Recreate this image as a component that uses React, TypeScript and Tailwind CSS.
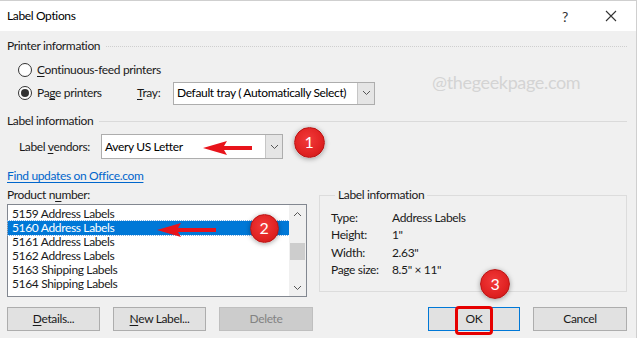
import type { ReactNode } from 'react'

const FONT = { fontFamily: '"Segoe UI", Lato, "Liberation Sans", sans-serif', letterSpacing: '-0.35px' }

function Radio({ checked }: { checked?: boolean }) {
  return (
    <span className="flex h-[14px] w-[14px] items-center justify-center rounded-full border border-[#333] bg-white">
      {checked && <span className="h-[8px] w-[8px] rounded-full bg-[#333]" />}
    </span>
  )
}

function Chevron() {
  return (
    <svg width="9" height="6" viewBox="0 0 9 6">
      <path d="M1 1 L4.5 4.5 L8 1" fill="none" stroke="#555" strokeWidth="1" />
    </svg>
  )
}

function Select({ value, className }: { value: string; className: string }) {
  return (
    <div className={`flex border border-[#adadad] bg-white ${className}`}>
      <div className="flex flex-1 items-center overflow-hidden whitespace-nowrap pl-[3px] text-[12px] text-black">
        {value}
      </div>
      <div className="flex w-[17px] items-center justify-center border-l border-[#c6c6c6] bg-[#e5e5e5]">
        <Chevron />
      </div>
    </div>
  )
}

function Button({ children, className = '' }: { children: ReactNode; className?: string }) {
  return (
    <div className={`flex h-[24px] items-center justify-center border text-[12px] ${className}`}>
      {children}
    </div>
  )
}

function Badge({ n, x, y, d }: { n: number; x: number; y: number; d: number }) {
  return (
    <div
      className="absolute flex items-center justify-center rounded-full border border-[#b81414] bg-[radial-gradient(circle_at_45%_40%,#f23a3a_0%,#e02222_60%,#c41616_100%)] text-[16px] text-white shadow-[0_1px_5px_rgba(0,0,0,0.35)]"
      style={{ left: x - d / 2, top: y - d / 2, width: d, height: d }}
    >
      {n}
    </div>
  )
}

// left-pointing red arrow, tip at x1
function Arrow({ x1, x2, y }: { x1: number; x2: number; y: number }) {
  const w = x2 - x1
  return (
    <svg className="absolute" style={{ left: x1, top: y - 8 }} width={w} height={16} viewBox={`0 0 ${w} 16`}>
      <path d={`M0 8 L24 1 L21 6 L${w} 6 L${w} 10 L21 10 L24 15 Z`} fill="#e8141b" />
    </svg>
  )
}

const items = [
  '5159 Address Labels',
  '5160 Address Labels',
  '5161 Address Labels',
  '5162 Address Labels',
  '5163 Shipping Labels',
  '5164 Shipping Labels',
]

const info = [
  ['Type:', 'Address Labels'],
  ['Height:', '1"'],
  ['Width:', '2.63"'],
  ['Page size:', '8.5" × 11"'],
]

export default function App() {
  return (
    <div
      className="relative h-[338px] w-[637px] overflow-hidden border-r border-t border-[#cfcfcf] bg-[#f0f0f0] text-[12px] text-[#1a1a1a]"
      style={FONT}
    >
      {/* Title bar */}
      <div className="flex h-[30px] items-center bg-white pl-[7px] pr-[19px]">
        <span className="flex-1 text-[12px] text-black">Label Options</span>
        <span className="mr-[37px] text-[14px] text-[#333]">?</span>
        <svg width="12" height="12" viewBox="0 0 12 12">
          <path d="M1 1 L11 11 M11 1 L1 11" stroke="#333" strokeWidth="1.1" />
        </svg>
      </div>

      <div className="flex flex-col pl-[7px] pr-[9px]">
        {/* Printer information */}
        <div className="mt-[7px] flex h-[16px] items-center">
          <span>Printer information</span>
          <div className="ml-[6px] flex-1 border-t border-dotted border-[#cfcfcf]" />
        </div>
        <div className="mt-[8px] flex h-[16px] items-center gap-[5px] pl-[11px]">
          <Radio />
          <span>
            <u className="underline-offset-2">C</u>ontinuous-feed printers
          </span>
        </div>
        <div className="mt-[3px] flex h-[24px] items-center">
          <div className="flex w-[130px] items-center gap-[5px] pl-[11px]">
            <Radio checked />
            <span>
              Pa<u className="underline-offset-2">g</u>e printers
            </span>
          </div>
          <span className="w-[36px]">
            <u className="underline-offset-2">T</u>ray:
          </span>
          <Select value="Default tray ( Automatically Select)" className="h-[23px] w-[202px]" />
        </div>

        {/* Label information */}
        <div className="mt-[8px] flex h-[16px] items-center">
          <span>Label information</span>
          <div className="ml-[6px] flex-1 border-t border-[#dadada]" />
        </div>
        <div className="mt-[5px] flex h-[25px] items-center pl-[12px]">
          <span className="w-[82px]">
            Label <u className="underline-offset-2">v</u>endors:
          </span>
          <Select value="Avery US Letter" className="h-[25px] w-[182px]" />
        </div>
        <div className="mt-[9px] flex h-[16px] items-center">
          <span className="text-[#0066cc] underline underline-offset-2">Find updates on Office.com</span>
        </div>

        {/* Product list + details */}
        <div className="mt-[3px] flex">
          <div className="flex w-[300px] flex-col">
            <div className="flex h-[16px] items-center">
              Product n<u className="underline-offset-2">u</u>mber:
            </div>
            <div className="mt-[1px] flex h-[93px] border border-[#828790] bg-white">
              <div className="flex flex-1 flex-col pt-[2px]">
                {items.map((t, i) => (
                  <div
                    key={t}
                    className={`flex h-[14px] items-center pl-[4px] ${
                      i === 1 ? 'bg-[#0078d7] text-white outline-1 outline-dotted outline-[#7fb2e5]' : ''
                    }`}
                  >
                    {t}
                  </div>
                ))}
              </div>
              <div className="flex w-[17px] flex-col items-center bg-[#f0f0f0]">
                <div className="flex h-[17px] items-center justify-center">
                  <svg width="9" height="6" viewBox="0 0 9 6">
                    <path d="M1 5 L4.5 1.5 L8 5" fill="none" stroke="#555" strokeWidth="1" />
                  </svg>
                </div>
                <div className="mt-[21px] h-[17px] w-[15px] bg-[#cdcdcd]" />
                <div className="flex-1" />
                <div className="flex h-[17px] items-center justify-center">
                  <Chevron />
                </div>
              </div>
            </div>
          </div>

          <fieldset className="ml-[12px] h-[105px] flex-1 border border-[#dcdcdc] pl-[11px]">
            <legend className="ml-[4px] px-[3px] leading-[16px]">Label information</legend>
            <div className="mt-[6px] flex flex-col">
              {info.map(([k, v]) => (
                <div key={k} className="flex h-[17.5px] items-center">
                  <span className="w-[61px]">{k}</span>
                  <span>{v}</span>
                </div>
              ))}
            </div>
          </fieldset>
        </div>

        {/* Buttons */}
        <div className="mt-[10px] flex items-center">
          <Button className="w-[93px] border-[#adadad] bg-[#e1e1e1]">
            <span>
              <u className="underline-offset-2">D</u>etails...
            </span>
          </Button>
          <Button className="ml-[13px] w-[93px] border-[#adadad] bg-[#e1e1e1]">
            <span>
              <u className="underline-offset-2">N</u>ew Label...
            </span>
          </Button>
          <Button className="ml-[13px] w-[94px] border-[#bfbfbf] bg-[#cccccc] text-[#838383]">Delete</Button>
          <div className="flex-1" />
          <Button className="w-[92px] border-[#0078d7] bg-[#e1e1e1]">OK</Button>
          <Button className="ml-[13px] w-[94px] border-[#adadad] bg-[#e1e1e1]">Cancel</Button>
        </div>
      </div>

      {/* Watermark */}
      <div className="absolute left-[432px] top-[69px] text-[18px] leading-[24px] text-[#d4d4d4]">@thegeekpage.com</div>

      {/* Annotations */}
      <Arrow x1={203} x2={252} y={147} />
      <Arrow x1={157} x2={216} y={229} />
      <Badge n={1} x={309} y={141} d={31} />
      <Badge n={2} x={264} y={227} d={29} />
      <Badge n={3} x={495} y={283} d={30} />
      <div className="absolute left-[455px] top-[305px] h-[29px] w-[38px] rounded-[4px] border-[3px] border-[#e60000]" />
    </div>
  )
}
